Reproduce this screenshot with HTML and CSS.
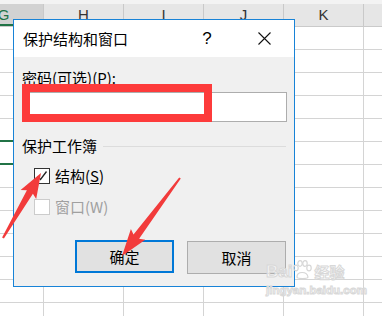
FILE: index.html
```html
<!DOCTYPE html>
<html lang="zh-CN">
<head>
    <meta charset="UTF-8">
    <title>保护结构和窗口</title>
    <link rel="stylesheet" href="styles.css">
</head>
<body>
    <!-- Tabulka v pozadí -->
    <div class="sheet">
        <div class="colhead">
            <div class="hcell sel-col">G</div>
            <div class="hcell">H</div>
            <div class="hcell">I</div>
            <div class="hcell">J</div>
            <div class="hcell">K</div>
            <div class="hcell"></div>
        </div>
        <div class="rows" id="rows"></div>
        <div class="sel-cell"></div>
    </div>

    <!-- Dialog -->
    <div class="dialog">
        <div class="titlebar">
            <span class="title">保护结构和窗口</span>
            <span class="tbtn help">?</span>
            <span class="tbtn close">
                <svg width="13" height="13" viewBox="0 0 13 13"><path d="M0.5 0.5 L12.5 12.5 M12.5 0.5 L0.5 12.5" stroke="#111" stroke-width="1.1" fill="none"/></svg>
            </span>
        </div>
        <div class="body">
            <label class="lbl">密码(可选)(P):</label>
            <div class="input"></div>
            <div class="group">
                <span>保护工作簿</span>
                <span class="rule"></span>
            </div>
            <div class="check">
                <span class="box">
                    <svg width="14" height="14" viewBox="0 0 14 14"><path d="M2.5 7.5 L5.5 10.5 L11.5 2.5" stroke="#222" stroke-width="1.3" fill="none"/></svg>
                </span>
                <span>结构(<u>S</u>)</span>
            </div>
            <div class="check off">
                <span class="box"></span>
                <span>窗口(W)</span>
            </div>
            <div class="buttons">
                <div class="btn primary">确定</div>
                <div class="btn">取消</div>
            </div>
        </div>
    </div>

    <!-- Anotace -->
    <div class="redbox"></div>
    <svg class="arrows" width="382" height="316" viewBox="0 0 382 316">
        <polygon fill="#f23b3b" points="2.1,237.5 26.9,190.2 20.6,190.1 41,173 36.2,199.1 32.9,193.8 3.9,238.5"/>
        <polygon fill="#f23b3b" points="180.8,178.6 139.1,238.8 145.3,239.7 122,256 130.9,228.9 133.5,234.6 179.2,177.4"/>
    </svg>

    <div class="watermark">
        <div class="wm-top">
            <span>Bai</span>
            <svg width="20" height="20" viewBox="0 0 20 20" class="paw">
                <g fill="none" stroke="#d6d6d6" stroke-width="1.2">
                    <ellipse cx="4" cy="8" rx="2.2" ry="2.8"/>
                    <ellipse cx="8" cy="3.5" rx="2.2" ry="2.8"/>
                    <ellipse cx="13" cy="3.5" rx="2.2" ry="2.8"/>
                    <ellipse cx="17" cy="8" rx="2.2" ry="2.8"/>
                    <path d="M5 17 C5 11 15 11 16 17 C16 19 5 19 5 17 Z"/>
                </g>
            </svg>
            <span>经验</span>
        </div>
        <div class="wm-url">jingyan.baidu.com</div>
    </div>

    <script>
        // řádky tabulky
        const rows = document.getElementById('rows');
        let html = '';
        for (let r = 0; r < 13; r++) {
            html += '<div class="row">';
            for (let c = 0; c < 6; c++) html += '<div class="cell"></div>';
            html += '</div>';
        }
        rows.innerHTML = html;
    </script>
</body>
</html>
```

FILE: styles.css
```css
body {
    margin: 0;
    background: #fff;
    font-family: "Noto Sans CJK SC", "Noto Sans", sans-serif;
    color: #000;
    overflow: hidden;
    width: 382px;
    height: 316px;
    position: relative;
}
.sheet {
    position: relative;
    padding-top: 4px;
    background: #fff;
}
.sheet::before {
    content: "";
    position: absolute;
    top: 0; left: 0; right: 0;
    height: 4px;
    background: #f3f3f3;
}
.colhead {
    display: flex;
    margin-left: -36px;
    height: 22px;
    background: #e6e6e6;
    border-bottom: 1px solid #cacaca;
}
.hcell {
    flex: 0 0 79px;
    border-right: 1px solid #c9c9c9;
    text-align: center;
    font-family: "Liberation Sans", sans-serif;
    font-size: 15px;
    line-height: 22px;
    color: #333;
}
.hcell.sel-col {
    background: #d2d2d2;
    color: #217346;
    border-bottom: 2px solid #217346;
    height: 20px;
    line-height: 22px;
}
.row {
    display: flex;
    margin-left: -36px;
    height: 22px;
    border-bottom: 1px solid #d4d4d4;
}
.cell {
    flex: 0 0 79px;
    border-right: 1px solid #d4d4d4;
}
.sel-cell {
    position: absolute;
    left: -40px;
    top: 140px;
    width: 80px;
    height: 21px;
    border: 2px solid #217346;
}
/* dialog */
.dialog {
    position: absolute;
    left: 13px;
    top: 19px;
    width: 280px;
    height: 266px;
    border: 1px solid #1883d7;
    background: #f0f0f0;
    display: flex;
    flex-direction: column;
}
.titlebar {
    height: 37px;
    background: #fff;
    display: flex;
    align-items: center;
}
.title {
    padding-left: 9px;
    font-size: 15px;
    flex: 1;
}
.tbtn {
    width: 46px;
    text-align: center;
    display: flex;
    justify-content: center;
    align-items: center;
}
.help {
    font-family: "Liberation Sans", sans-serif;
    font-size: 17px;
    margin-right: 11px;
}
.close {
    margin-right: 7px;
}
.body {
    padding: 11px 8px 0 8px;
    display: flex;
    flex-direction: column;
    font-size: 15px;
}
.lbl {
    line-height: 20px;
}
.input {
    margin-top: 4px;
    height: 28px;
    width: 263px;
    background: #fff;
    border: 1px solid #adadad;
}
.group {
    margin-top: 14px;
    display: flex;
    align-items: center;
    line-height: 20px;
}
.rule {
    flex: 1;
    margin-left: 6px;
    height: 1px;
    background: #dcdcdc;
}
.check {
    display: flex;
    align-items: center;
    margin-top: 10px;
    margin-left: 12px;
    line-height: 20px;
    gap: 5px;
}
.check + .check {
    margin-top: 11px;
}
.box {
    width: 14px;
    height: 14px;
    border: 1px solid #333;
    background: #fff;
    display: flex;
}
.check.off {
    color: #a0a0a0;
}
.check.off .box {
    border-color: #cccccc;
}
.buttons {
    display: flex;
    justify-content: flex-end;
    gap: 13px;
    margin-top: 24px;
}
.btn {
    width: 97px;
    height: 31px;
    border: 1px solid #adadad;
    background: #e1e1e1;
    text-align: center;
    line-height: 31px;
}
.btn.primary {
    width: 95px;
    height: 29px;
    border: 2px solid #0078d7;
    line-height: 29px;
    margin-top: -1px;
}
/* anotace */
.redbox {
    position: absolute;
    left: 22px;
    top: 84px;
    width: 174px;
    height: 22px;
    border: 8px solid #fd3b3b;
}
.arrows {
    position: absolute;
    left: 0;
    top: 0;
}
.watermark {
    position: absolute;
    left: 266px;
    top: 260px;
    color: rgba(255,255,255,0.6);
    -webkit-text-stroke: 1px #d8d8d8;
}
.wm-top {
    display: flex;
    align-items: flex-end;
    font-family: "Liberation Sans", sans-serif;
    font-weight: bold;
    font-size: 17px;
    line-height: 20px;
}
.wm-top span:last-child {
    font-family: "Noto Sans CJK SC", sans-serif;
    font-size: 15px;
    margin-left: 2px;
}
.paw {
    margin-bottom: 2px;
}
.wm-url {
    font-family: "Liberation Sans", sans-serif;
    font-size: 11.5px;
    font-weight: bold;
    line-height: 14px;
    margin-top: 1px;
}
```
